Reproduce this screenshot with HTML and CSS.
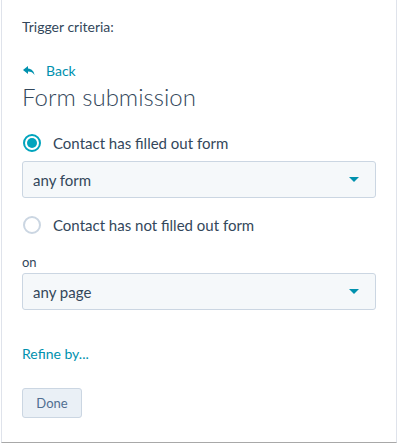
FILE: index.html
```html
<!DOCTYPE html>
<html lang="en">
<head>
    <meta charset="UTF-8">
    <title>Trigger criteria</title>
    <link rel="stylesheet" href="styles.css">
</head>
<body>
    <div class="panel">
        <div class="section-label">Trigger criteria:</div>

        <a class="back-link" href="#">
            <svg class="back-icon" width="12" height="10" viewBox="0 0 12 10">
                <path d="M5 0 L0 4 L5 8 L5 5.5 C8 5.5 10 6.5 11.5 9 C11 5.5 9 3 5 2.5 Z" fill="#0091ae"/>
            </svg>
            Back
        </a>
        <h2 class="title">Form submission</h2>

        <label class="radio-row">
            <span class="radio checked"></span>
            Contact has filled out form
        </label>
        <div class="select">
            <span>any form</span>
            <span class="caret"></span>
        </div>

        <label class="radio-row">
            <span class="radio"></span>
            Contact has not filled out form
        </label>

        <div class="field-label">on</div>
        <div class="select">
            <span>any page</span>
            <span class="caret"></span>
        </div>

        <a class="refine-link" href="#">Refine by...</a>

        <button class="button">Done</button>
    </div>
</body>
</html>
```

FILE: styles.css
```css
body {
    margin: 0;
    font-family: Lato, "Open Sans", sans-serif;
    color: #33475b;
    background: #fff;
}
.panel {
    margin-left: 1px;
    width: 396px;
    height: 443px;
    border: 1px solid #dfe3eb;
    border-top: none;
    border-bottom: 1px solid #a8a8a8;
    padding: 18px 20px 0 20px;
    box-sizing: border-box;
}
.section-label {
    font-size: 14px;
    line-height: 18px;
}
.back-link {
    display: flex;
    align-items: center;
    gap: 11px;
    margin-top: 27px;
    color: #0091ae;
    text-decoration: none;
    font-size: 14px;
    line-height: 16px;
    padding-left: 1px;
}
.title {
    margin: 4px 0 0 0;
    font-size: 24px;
    font-weight: 300;
    line-height: 28px;
}
.radio-row {
    display: flex;
    align-items: center;
    gap: 12px;
    margin-top: 22px;
    font-size: 15px;
    line-height: 20px;
    padding-left: 1px;
}
.radio {
    width: 18px;
    height: 18px;
    box-sizing: border-box;
    border-radius: 50%;
    border: 2px solid #cbd6e2;
    background: #fff;
    display: flex;
    align-items: center;
    justify-content: center;
}
.radio.checked {
    border-color: #00a4bd;
}
.radio.checked::after {
    content: "";
    width: 10px;
    height: 10px;
    border-radius: 50%;
    background: #00a4bd;
}
.select {
    display: flex;
    align-items: center;
    justify-content: space-between;
    height: 37px;
    box-sizing: border-box;
    margin-top: 8px;
    padding: 0 16px 0 10px;
    background: #f5f8fa;
    border: 1px solid #cbd6e2;
    border-radius: 3px;
    font-size: 15px;
}
.caret {
    width: 0;
    height: 0;
    border-left: 5px solid transparent;
    border-right: 5px solid transparent;
    border-top: 5px solid #0091ae;
}
.select + .radio-row {
    margin-top: 17px;
}
.field-label {
    margin-top: 19px;
    font-size: 13px;
    line-height: 16px;
}
.field-label + .select {
    margin-top: 3px;
}
.refine-link {
    display: block;
    margin-top: 35px;
    color: #0091ae;
    text-decoration: none;
    font-size: 14px;
    line-height: 18px;
}
.button {
    display: block;
    margin-top: 25px;
    width: 60px;
    height: 30px;
    padding: 0;
    background: #eaf0f6;
    border: 1px solid #cbd6e2;
    border-radius: 3px;
    color: #506e91;
    font-family: inherit;
    font-size: 13px;
}
```
